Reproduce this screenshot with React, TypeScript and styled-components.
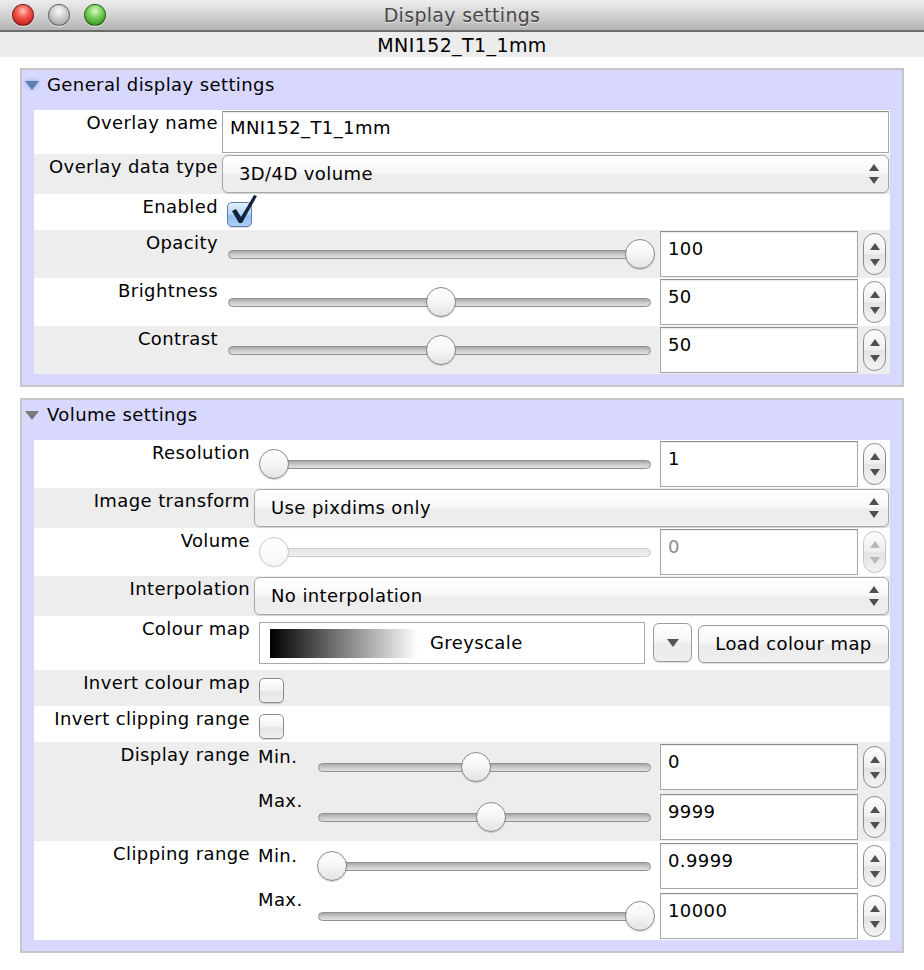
import styled, { createGlobalStyle } from "styled-components";

const GlobalStyle = createGlobalStyle`
	html, body {
		margin: 0;
		padding: 0;
		background: #ffffff;
	}
	body {
		font-family: "DejaVu Sans", "Liberation Sans", sans-serif;
		font-size: 18px;
		line-height: 22px;
		letter-spacing: 0.4px;
		color: #000000;
	}
`;

const Window = styled.div`
	width: 924px;
	min-height: 970px;
	background: #ffffff;
	display: flex;
	flex-direction: column;
`;

const TitleBar = styled.div`
	height: 30px;
	border-bottom: 2px solid #6c6c6c;
	background: linear-gradient(#ededed, #d6d6d6 45%, #b2b2b2);
	display: grid;
	grid-template-columns: 1fr auto 1fr;
	align-items: center;
`;

const Lights = styled.div`
	display: flex;
	gap: 14px;
	padding-left: 12px;
`;

const lightTones = {
	red: "radial-gradient(circle at 50% 30%, #ffc2bd 0%, #f5574e 38%, #c8241d 80%, #a51a15)",
	grey: "radial-gradient(circle at 50% 30%, #fbfbfb 0%, #d3d3d3 40%, #a3a3a3 85%)",
	green: "radial-gradient(circle at 50% 30%, #dcf9c4 0%, #79d25a 40%, #35921f 85%)",
};

const Light = styled.span<{ $tone: keyof typeof lightTones }>`
	width: 22px;
	height: 22px;
	box-sizing: border-box;
	border-radius: 50%;
	border: 1px solid rgba(0, 0, 0, 0.4);
	background: ${p => lightTones[p.$tone]};
	box-shadow: 0 1px 1px rgba(255, 255, 255, 0.6);
`;

const Title = styled.div`
	font-size: 19px;
	letter-spacing: 0.3px;
	color: #484848;
	text-shadow: 0 1px 0 rgba(255, 255, 255, 0.55);
`;

const SubTitle = styled.div`
	height: 25px;
	background: #ececec;
	display: flex;
	align-items: center;
	justify-content: center;
	font-size: 19px;
`;

const Content = styled.div`
	display: flex;
	flex-direction: column;
	gap: 11px;
	padding: 11px 20px 0;
`;

const Section = styled.div`
	border: 2px solid #c6c6c6;
	background: #d8d8ff;
	padding: 0 12px 11px;
`;

const SectionHeader = styled.div`
	height: 40px;
	box-sizing: border-box;
	display: flex;
	align-items: flex-start;
	gap: 8px;
	margin: 0 -12px;
	padding: 4px 0 0 3px;
`;

const TriangleIcon = styled.svg<{ $focused?: boolean }>`
	margin-top: 7px;
	fill: ${p => (p.$focused ? "#5f7fae" : "#7a7a7a")};
	filter: ${p => (p.$focused ? "drop-shadow(0 0 2px #79a6ff)" : "none")};
`;

const Body = styled.div`
	background: #ffffff;
`;

const Row = styled.div<{ $label: number; $height: number; $shaded?: boolean }>`
	display: grid;
	grid-template-columns: ${p => p.$label}px 1fr;
	column-gap: 4px;
	height: ${p => p.$height}px;
	box-sizing: border-box;
	padding-right: 1px;
	background: ${p => (p.$shaded ? "#ededed" : "#ffffff")};
`;

const Label = styled.div`
	text-align: right;
	padding-top: 2px;
	white-space: nowrap;
`;

const Control = styled.div<{ $top?: number; $inset?: number }>`
	display: flex;
	align-items: flex-start;
	padding-top: ${p => p.$top ?? 0}px;
	padding-left: ${p => p.$inset ?? 0}px;
	min-width: 0;
`;

const TextInput = styled.div`
	flex: 1;
	height: 42px;
	margin-top: 1px;
	box-sizing: border-box;
	border: 1px solid #a6a6a6;
	border-top-color: #8e8e8e;
	padding: 5px 7px 0;
	background: #ffffff;
	box-shadow: inset 0 1px 1px rgba(0, 0, 0, 0.08);
`;

const SelectBox = styled.div`
	flex: 1;
	height: 38px;
	margin-top: 1px;
	box-sizing: border-box;
	border: 1px solid #a8a8a8;
	border-radius: 6px;
	background: linear-gradient(#ffffff, #f8f8f8 45%, #ececec 55%, #eeeeee);
	box-shadow: 0 1px 1px rgba(0, 0, 0, 0.12);
	display: flex;
	align-items: center;
	justify-content: space-between;
	padding: 0 9px 0 16px;
`;

const Arrows = styled.svg`
	fill: #4f4f4f;
	flex-shrink: 0;
`;

const CheckBody = styled.div<{ $checked?: boolean }>`
	position: relative;
	width: 25px;
	height: 25px;
	margin: 8px 0 0 5px;
	box-sizing: border-box;
	border-radius: 5px;
	border: 1px solid ${p => (p.$checked ? "#5d7ea8" : "#8c8c8c")};
	background: ${p =>
		p.$checked
			? "linear-gradient(#e4f0fc, #b4d4f4 50%, #92c0ef 55%, #a9d0f6)"
			: "linear-gradient(#ffffff, #f3f3f3 50%, #e6e6e6 55%, #efefef)"};
	box-shadow: 0 1px 1px rgba(0, 0, 0, 0.15);
`;

const CheckMark = styled.svg`
	position: absolute;
	left: 0;
	top: -9px;
	overflow: visible;
`;

const SliderLine = styled.div<{ $inset?: number }>`
	flex: 1;
	display: flex;
	align-items: center;
	margin-top: 1px;
	padding-left: ${p => p.$inset ?? 0}px;
	min-width: 0;
`;

const SliderBody = styled.div`
	flex: 1;
	position: relative;
	height: 46px;
	display: flex;
	align-items: center;
	min-width: 0;
`;

const Track = styled.div<{ $disabled?: boolean }>`
	flex: 1;
	height: 9px;
	margin: 0 4px 0 1px;
	box-sizing: border-box;
	border-radius: 5px;
	border: 1px solid ${p => (p.$disabled ? "#cccccc" : "#909090")};
	background: ${p =>
		p.$disabled
			? "linear-gradient(#e4e4e4, #f0f0f0)"
			: "linear-gradient(#a8a8a8, #cdcdcd 55%, #e2e2e2)"};
`;

const Thumb = styled.div<{ $disabled?: boolean }>`
	position: absolute;
	top: 50%;
	width: 30px;
	height: 30px;
	margin-top: -15px;
	box-sizing: border-box;
	border-radius: 50%;
	border: 1px solid ${p => (p.$disabled ? "#c8c8c8" : "#8a8a8a")};
	background: ${p =>
		p.$disabled
			? "linear-gradient(#ffffff, #f6f6f6)"
			: "linear-gradient(#ffffff, #f5f5f5 50%, #e3e3e3)"};
	box-shadow: 0 1px 1px rgba(0, 0, 0, ${p => (p.$disabled ? 0.05 : 0.18)});
`;

const ValueBox = styled.div<{ $disabled?: boolean }>`
	width: 198px;
	height: 46px;
	margin-left: 5px;
	box-sizing: border-box;
	border: 1px solid #a6a6a6;
	border-top-color: #8e8e8e;
	padding: 6px 7px 0;
	background: #ffffff;
	color: ${p => (p.$disabled ? "#8c8c8c" : "#000000")};
	box-shadow: inset 0 1px 1px rgba(0, 0, 0, 0.08);
`;

const SpinnerBody = styled.div<{ $disabled?: boolean }>`
	width: 23px;
	height: 42px;
	margin: 0 3px 0 5px;
	box-sizing: border-box;
	border-radius: 12px;
	border: 1px solid ${p => (p.$disabled ? "#c4c4c4" : "#8a8a8a")};
	background: linear-gradient(#fdfdfd, #efefef 50%, #e3e3e3 52%, #f3f3f3);
	display: flex;
	flex-direction: column;
	align-items: center;
	justify-content: space-between;
	padding: 9px 0 8px;
	fill: ${p => (p.$disabled ? "#b8b8b8" : "#505050")};
`;

const ColourBox = styled.div`
	flex: 1;
	height: 42px;
	box-sizing: border-box;
	border: 1px solid #a8a8a8;
	background: #ffffff;
	display: flex;
	align-items: center;
	padding-left: 10px;
	min-width: 0;
`;

const Swatch = styled.div`
	width: 148px;
	height: 29px;
	background: linear-gradient(to right, #000000, #ffffff);
	margin-right: 12px;
`;

const RoundButton = styled.div<{ $width: number; $height: number; $gap: number; $top: number }>`
	width: ${p => p.$width}px;
	height: ${p => p.$height}px;
	margin: ${p => p.$top}px 0 0 ${p => p.$gap}px;
	box-sizing: border-box;
	border: 1px solid #9c9c9c;
	border-radius: 6px;
	background: linear-gradient(#ffffff, #f7f7f7 45%, #ebebeb 55%, #efefef);
	box-shadow: 0 1px 1px rgba(0, 0, 0, 0.15);
	display: flex;
	align-items: center;
	justify-content: center;
	fill: #555555;
`;

const RangeStack = styled.div`
	display: flex;
	flex-direction: column;
	gap: 4px;
	padding-top: 2px;
	min-width: 0;
`;

const SubRow = styled.div`
	display: flex;
	align-items: center;
	height: 46px;
`;

const SubLabel = styled.div<{ $offset: number }>`
	width: 63px;
	box-sizing: border-box;
	padding-left: 4px;
	align-self: flex-start;
	margin-top: ${p => p.$offset}px;
	flex-shrink: 0;
`;

const Disclosure = ({ focused }: { focused?: boolean }) => (
	<TriangleIcon width="14" height="10" viewBox="0 0 14 10" $focused={focused}>
		<polygon points="0,0 14,0 7,9" />
	</TriangleIcon>
);

const UpDown = () => (
	<Arrows width="10" height="20" viewBox="0 0 10 20">
		<polygon points="0,7 5,0 10,7" />
		<polygon points="0,13 10,13 5,20" />
	</Arrows>
);

const Select = ({ text }: { text: string }) => (
	<SelectBox>
		<span>{text}</span>
		<UpDown />
	</SelectBox>
);

const Checkbox = ({ checked }: { checked?: boolean }) => (
	<CheckBody $checked={checked}>
		{checked && (
			<CheckMark width="30" height="34" viewBox="0 0 30 34">
				<path
					d="M4 17 L8 15 L13 23 L26 1 L29 2 L14 29 L11 29 Z"
					fill="#14233d"
				/>
			</CheckMark>
		)}
	</CheckBody>
);

const Spinner = ({ disabled }: { disabled?: boolean }) => (
	<SpinnerBody $disabled={disabled}>
		<svg width="10" height="7" viewBox="0 0 10 7">
			<polygon points="0,7 5,0 10,7" />
		</svg>
		<svg width="10" height="7" viewBox="0 0 10 7">
			<polygon points="0,0 10,0 5,7" />
		</svg>
	</SpinnerBody>
);

interface sliderProps {
	value: number;
	text: string;
	disabled?: boolean;
}

const SliderField = ({ value, text, disabled }: sliderProps) => (
	<>
		<SliderBody>
			<Track $disabled={disabled} />
			<Thumb
				$disabled={disabled}
				style={{ left: `calc((100% - 30px) * ${value})` }}
			/>
		</SliderBody>
		<ValueBox $disabled={disabled}>{text}</ValueBox>
		<Spinner disabled={disabled} />
	</>
);

const G = 184;
const V = 216;

const App = () => (
	<Window>
		<GlobalStyle />
		<TitleBar>
			<Lights>
				<Light $tone="red" />
				<Light $tone="grey" />
				<Light $tone="green" />
			</Lights>
			<Title>Display settings</Title>
			<div />
		</TitleBar>
		<SubTitle>MNI152_T1_1mm</SubTitle>
		<Content>
			<Section>
				<SectionHeader>
					<Disclosure focused />
					<span>General display settings</span>
				</SectionHeader>
				<Body>
					<Row $label={G} $height={44}>
						<Label>Overlay name</Label>
						<Control>
							<TextInput>MNI152_T1_1mm</TextInput>
						</Control>
					</Row>
					<Row $label={G} $height={40} $shaded>
						<Label>Overlay data type</Label>
						<Control>
							<Select text="3D/4D volume" />
						</Control>
					</Row>
					<Row $label={G} $height={36}>
						<Label>Enabled</Label>
						<Control>
							<Checkbox checked />
						</Control>
					</Row>
					<Row $label={G} $height={48} $shaded>
						<Label>Opacity</Label>
						<Control>
							<SliderLine $inset={5}>
								<SliderField value={1} text="100" />
							</SliderLine>
						</Control>
					</Row>
					<Row $label={G} $height={48}>
						<Label>Brightness</Label>
						<Control>
							<SliderLine $inset={5}>
								<SliderField value={0.5} text="50" />
							</SliderLine>
						</Control>
					</Row>
					<Row $label={G} $height={48} $shaded>
						<Label>Contrast</Label>
						<Control>
							<SliderLine $inset={5}>
								<SliderField value={0.5} text="50" />
							</SliderLine>
						</Control>
					</Row>
				</Body>
			</Section>

			<Section>
				<SectionHeader>
					<Disclosure />
					<span>Volume settings</span>
				</SectionHeader>
				<Body>
					<Row $label={V} $height={48}>
						<Label>Resolution</Label>
						<Control>
							<SliderLine $inset={5}>
								<SliderField value={0} text="1" />
							</SliderLine>
						</Control>
					</Row>
					<Row $label={V} $height={40} $shaded>
						<Label>Image transform</Label>
						<Control>
							<Select text="Use pixdims only" />
						</Control>
					</Row>
					<Row $label={V} $height={48}>
						<Label>Volume</Label>
						<Control>
							<SliderLine $inset={5}>
								<SliderField value={0} text="0" disabled />
							</SliderLine>
						</Control>
					</Row>
					<Row $label={V} $height={40} $shaded>
						<Label>Interpolation</Label>
						<Control>
							<Select text="No interpolation" />
						</Control>
					</Row>
					<Row $label={V} $height={54}>
						<Label>Colour map</Label>
						<Control $top={6} $inset={5}>
							<ColourBox>
								<Swatch />
								<span>Greyscale</span>
							</ColourBox>
							<RoundButton $width={39} $height={39} $gap={8} $top={1}>
								<svg width="12" height="8" viewBox="0 0 12 8">
									<polygon points="0,0 12,0 6,8" />
								</svg>
							</RoundButton>
							<RoundButton $width={191} $height={38} $gap={6} $top={3}>
								Load colour map
							</RoundButton>
						</Control>
					</Row>
					<Row $label={V} $height={36} $shaded>
						<Label>Invert colour map</Label>
						<Control>
							<Checkbox />
						</Control>
					</Row>
					<Row $label={V} $height={36}>
						<Label>Invert clipping range</Label>
						<Control>
							<Checkbox />
						</Control>
					</Row>
					<Row $label={V} $height={99} $shaded>
						<Label>Display range</Label>
						<RangeStack>
							<SubRow>
								<SubLabel $offset={2}>Min.</SubLabel>
								<SliderField value={0.467} text="0" />
							</SubRow>
							<SubRow>
								<SubLabel $offset={-4}>Max.</SubLabel>
								<SliderField value={0.516} text="9999" />
							</SubRow>
						</RangeStack>
					</Row>
					<Row $label={V} $height={99}>
						<Label>Clipping range</Label>
						<RangeStack>
							<SubRow>
								<SubLabel $offset={2}>Min.</SubLabel>
								<SliderField value={0} text="0.9999" />
							</SubRow>
							<SubRow>
								<SubLabel $offset={-4}>Max.</SubLabel>
								<SliderField value={1} text="10000" />
							</SubRow>
						</RangeStack>
					</Row>
				</Body>
			</Section>
		</Content>
	</Window>
);

export default App;
